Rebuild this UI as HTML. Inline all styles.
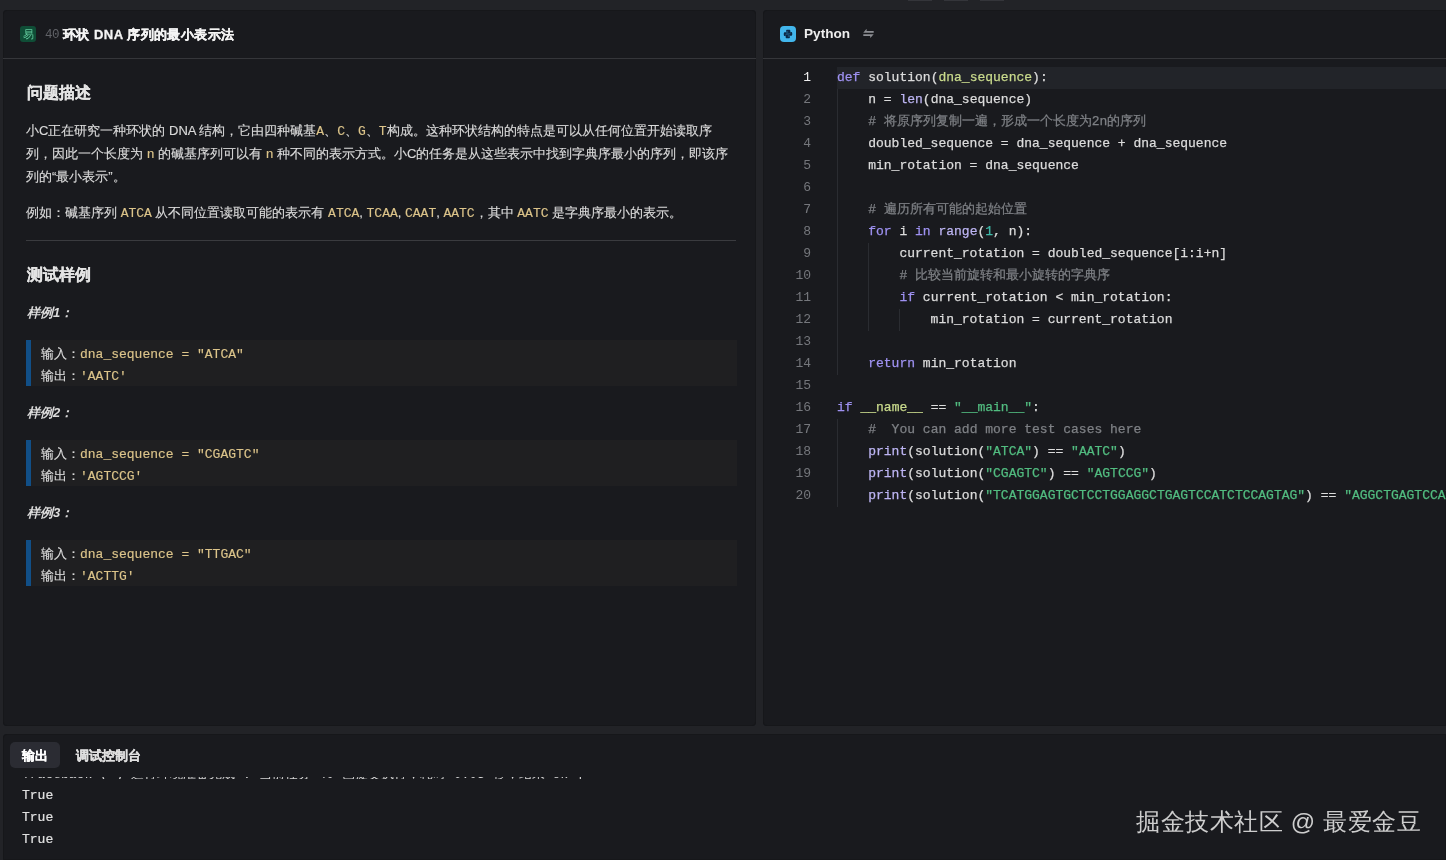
<!DOCTYPE html>
<html><head><meta charset="utf-8">
<style>
*{margin:0;padding:0;box-sizing:border-box}
html,body{width:1446px;height:860px;overflow:hidden;background:#222327;font-family:"Liberation Sans",sans-serif;color:#e6e6e6}
.panel{position:absolute;background:#191a1e;overflow:hidden;will-change:transform;box-shadow:inset 0 0 0 1px #16171a}
#left{left:3px;top:10px;width:753px;height:716px;border-radius:4px}
#right{left:763px;top:10px;width:683px;height:716px;border-radius:4px 0 0 4px}
#bottom{left:3px;top:734px;width:1443px;height:126px;border-radius:4px 0 0 0}
.hdr{position:absolute;left:0;top:0;right:0;height:49px;border-bottom:1px solid #35363a}
.abs{position:absolute;white-space:nowrap}
.mono{font-family:"Liberation Mono",monospace}
.badge{left:17px;top:16px;width:16px;height:16px;background:#0f4d36;border-radius:3px;color:#62c99c;font-size:11px;line-height:16px;text-align:center}
.num{left:42px;top:16px;color:#606267;font-size:12.5px;letter-spacing:-0.6px;line-height:18px}
.title{left:60px;top:15px;color:#f4f4f4;font-size:13px;letter-spacing:0.45px;font-weight:bold;line-height:20px;-webkit-text-stroke:0.3px currentColor}
.h2{font-size:16px;font-weight:bold;color:#e4e4e4;line-height:20px;-webkit-text-stroke:0.2px currentColor}
.p{font-size:13px;line-height:22px;color:#dadada;-webkit-text-stroke:0.15px currentColor}
.y{color:#dcc48a;font-family:"Liberation Mono",monospace}
.hr{position:absolute;left:23px;width:710px;height:1px;background:#3a3b3f}
.lbl{font-size:13px;font-weight:bold;font-style:italic;color:#dcdcdc;line-height:20px}
.blk{position:absolute;left:23px;width:711px;height:46px;background:#1f1f21;border-left:5px solid #114f87}
.blk .l{position:absolute;left:10px;font-size:13px;line-height:22px;color:#dadada;white-space:nowrap;-webkit-text-stroke:0.15px currentColor}
.blk .c{color:#dcc48a;font-family:"Liberation Mono",monospace}
/* code */
.code{position:absolute;left:1px;top:57px;right:0}
.ln{position:absolute;width:47px;text-align:right;font-family:"Liberation Mono",monospace;font-size:13px;line-height:22px;color:#75777c}
.cl{position:absolute;left:73px;font-family:"Liberation Mono",monospace;font-size:13px;line-height:22px;color:#dcdcdc;white-space:pre;-webkit-text-stroke:0.25px currentColor}
.k{color:#9f92f2}.f{color:#dcdcdc}.pa{color:#c9da8c}.b{color:#bdb5f3}.n{color:#3fb8a8}.s{color:#52bd80}.cm{color:#7e8085}
.guide{position:absolute;width:1px;background:#2a2c31}
.tab{position:absolute;top:8px;height:26px;font-size:13px;font-weight:bold;line-height:28px;border-radius:5px;-webkit-text-stroke:0.2px currentColor}
.out{position:absolute;left:19px;margin-top:2px;-webkit-text-stroke:0.2px currentColor;font-family:"Liberation Mono",monospace;font-size:13px;line-height:22px;color:#e0e0e0}
.wm{position:absolute;will-change:transform;left:1136px;top:806px;font-size:24px;letter-spacing:0.6px;color:#cdcdcd;white-space:nowrap;line-height:32px}
</style></head><body>
<div class="abs" style="left:908px;top:0;width:24px;height:1px;background:#34353a"></div>
<div class="abs" style="left:944px;top:0;width:24px;height:1px;background:#34353a"></div>
<div class="abs" style="left:980px;top:0;width:24px;height:1px;background:#34353a"></div>

<div id="left" class="panel">
  <div class="hdr">
    <div class="abs badge">易</div>
    <div class="abs num mono">40</div>
    <div class="abs title">环状 DNA 序列的最小表示法</div>
  </div>
  <div class="abs h2" style="left:24px;top:73px">问题描述</div>
  <div class="abs p" style="left:23px;top:110px">小C正在研究一种环状的 DNA 结构，它由四种碱基<span class="y">A</span>、<span class="y">C</span>、<span class="y">G</span>、<span class="y">T</span>构成。这种环状结构的特点是可以从任何位置开始读取序<br>列，因此一个长度为 <span class="y">n</span> 的碱基序列可以有 <span class="y">n</span> 种不同的表示方式。小C的任务是从这些表示中找到字典序最小的序列，即该序<br>列的“最小表示”。</div>
  <div class="abs p" style="left:23px;top:192px">例如：碱基序列 <span class="y">ATCA</span> 从不同位置读取可能的表示有 <span class="y">ATCA</span>, <span class="y">TCAA</span>, <span class="y">CAAT</span>, <span class="y">AATC</span>，其中 <span class="y">AATC</span> 是字典序最小的表示。</div>
  <div class="hr" style="top:230px"></div>
  <div class="abs h2" style="left:24px;top:255px">测试样例</div>
  <div class="abs lbl" style="left:24px;top:293px">样例1：</div>
  <div class="blk" style="top:330px"><div class="l" style="top:3px">输入：<span class="c">dna_sequence = "ATCA"</span></div><div class="l" style="top:25px">输出：<span class="c">'AATC'</span></div></div>
  <div class="abs lbl" style="left:24px;top:393px">样例2：</div>
  <div class="blk" style="top:430px"><div class="l" style="top:3px">输入：<span class="c">dna_sequence = "CGAGTC"</span></div><div class="l" style="top:25px">输出：<span class="c">'AGTCCG'</span></div></div>
  <div class="abs lbl" style="left:24px;top:493px">样例3：</div>
  <div class="blk" style="top:530px"><div class="l" style="top:3px">输入：<span class="c">dna_sequence = "TTGAC"</span></div><div class="l" style="top:25px">输出：<span class="c">'ACTTG'</span></div></div>
</div>

<div id="right" class="panel">
  <div class="hdr">
    <svg class="abs" style="left:17px;top:16px" width="16" height="16" viewBox="0 0 16 16"><rect width="16" height="16" rx="4" fill="#42b6ec"/><g transform="translate(8 8) scale(0.88) translate(-8 -8)"><path fill="#0b2845" d="M7.2 3.2h2.1c.8 0 1.4.6 1.4 1.4v2.3c0 .5-.4.9-.9.9H6.6c-.7 0-1.2.5-1.2 1.2v1.3H4.6c-.8 0-1.4-.6-1.4-1.5V7.4c0-.8.6-1.4 1.4-1.4h3.6v-.5H5.8v-.9c0-.8.6-1.4 1.4-1.4z"/><path fill="#0b2845" d="M8.8 12.8H6.7c-.8 0-1.4-.6-1.4-1.4V9.1c0-.5.4-.9.9-.9h3.2c.7 0 1.2-.5 1.2-1.2V5.7h.8c.8 0 1.4.6 1.4 1.5v1.4c0 .8-.6 1.4-1.4 1.4H7.8v.5h2.4v.9c0 .8-.6 1.4-1.4 1.4z"/></g></svg>
    <div class="abs" style="left:41px;top:14px;font-size:13.6px;font-weight:bold;color:#eeeeee;line-height:20px">Python</div>
    <svg class="abs" style="left:100px;top:18px" width="11" height="10" viewBox="0 0 11 10"><path d="M0.3 4.8L3.6 0.7V3H10.7V4.8Z M10.7 6.2L7.2 9.9V8H0.3V6.2Z" fill="#8c8e93"/></svg>
  </div>
  <div class="code" id="code">
<div class="abs" style="left:73px;top:0;width:620px;height:22px;background:#222429"></div>
<div class="ln" style="top:0px;color:#f0f0f0">1</div>
<div class="cl" style="top:0px"><span class="k">def</span> <span class="f">solution</span>(<span class="pa">dna_sequence</span>):</div>
<div class="ln" style="top:22px;color:#75777c">2</div>
<div class="cl" style="top:22px">    n = <span class="b">len</span>(dna_sequence)</div>
<div class="ln" style="top:44px;color:#75777c">3</div>
<div class="cl" style="top:44px">    <span class="cm"># 将原序列复制一遍，形成一个长度为2n的序列</span></div>
<div class="ln" style="top:66px;color:#75777c">4</div>
<div class="cl" style="top:66px">    doubled_sequence = dna_sequence + dna_sequence</div>
<div class="ln" style="top:88px;color:#75777c">5</div>
<div class="cl" style="top:88px">    min_rotation = dna_sequence</div>
<div class="ln" style="top:110px;color:#75777c">6</div>
<div class="cl" style="top:110px"></div>
<div class="ln" style="top:132px;color:#75777c">7</div>
<div class="cl" style="top:132px">    <span class="cm"># 遍历所有可能的起始位置</span></div>
<div class="ln" style="top:154px;color:#75777c">8</div>
<div class="cl" style="top:154px">    <span class="k">for</span> i <span class="k">in</span> <span class="b">range</span>(<span class="n">1</span>, n):</div>
<div class="ln" style="top:176px;color:#75777c">9</div>
<div class="cl" style="top:176px">        current_rotation = doubled_sequence[i:i+n]</div>
<div class="ln" style="top:198px;color:#75777c">10</div>
<div class="cl" style="top:198px">        <span class="cm"># 比较当前旋转和最小旋转的字典序</span></div>
<div class="ln" style="top:220px;color:#75777c">11</div>
<div class="cl" style="top:220px">        <span class="k">if</span> current_rotation &lt; min_rotation:</div>
<div class="ln" style="top:242px;color:#75777c">12</div>
<div class="cl" style="top:242px">            min_rotation = current_rotation</div>
<div class="ln" style="top:264px;color:#75777c">13</div>
<div class="cl" style="top:264px"></div>
<div class="ln" style="top:286px;color:#75777c">14</div>
<div class="cl" style="top:286px">    <span class="k">return</span> min_rotation</div>
<div class="ln" style="top:308px;color:#75777c">15</div>
<div class="cl" style="top:308px"></div>
<div class="ln" style="top:330px;color:#75777c">16</div>
<div class="cl" style="top:330px"><span class="k">if</span> <span class="pa">__name__</span> == <span class="s">"__main__"</span>:</div>
<div class="ln" style="top:352px;color:#75777c">17</div>
<div class="cl" style="top:352px">    <span class="cm">#  You can add more test cases here</span></div>
<div class="ln" style="top:374px;color:#75777c">18</div>
<div class="cl" style="top:374px">    <span class="b">print</span>(solution(<span class="s">"ATCA"</span>) == <span class="s">"AATC"</span>)</div>
<div class="ln" style="top:396px;color:#75777c">19</div>
<div class="cl" style="top:396px">    <span class="b">print</span>(solution(<span class="s">"CGAGTC"</span>) == <span class="s">"AGTCCG"</span>)</div>
<div class="ln" style="top:418px;color:#75777c">20</div>
<div class="cl" style="top:418px">    <span class="b">print</span>(solution(<span class="s">"TCATGGAGTGCTCCTGGAGGCTGAGTCCATCTCCAGTAG"</span>) == <span class="s">"AGGCTGAGTCCATCTCCAGTAGTCATGGAGTGCTCCTGG"</span>)</div>
<div class="guide" style="left:73px;top:22px;height:286px"></div>
<div class="guide" style="left:104px;top:176px;height:88px"></div>
<div class="guide" style="left:135px;top:242px;height:22px"></div>
<div class="guide" style="left:73px;top:352px;height:88px"></div>
</div>
</div>

<div id="bottom" class="panel">
  <div class="tab" style="left:7px;width:50px;background:#2b2c33;color:#ffffff;text-align:center">输出</div>
  <div class="tab" style="left:73px;color:#e0e0e0">调试控制台</div>
  <div class="abs" style="left:19px;top:43px;height:2px;overflow:hidden;width:600px"><div class="mono" style="font-size:13px;line-height:22px;margin-top:-13px;color:#d8d8d8;white-space:nowrap">Traceback (    ) 运行环境准备完成 : 当前任务 40 已提交执行，耗时 0.03 秒，结果 ok      ]</div></div>
  <div class="out" style="top:49px">True</div>
  <div class="out" style="top:71px">True</div>
  <div class="out" style="top:93px">True</div>
</div>
<div class="wm">掘金技术社区 @ 最爱金豆</div>
</body></html>
